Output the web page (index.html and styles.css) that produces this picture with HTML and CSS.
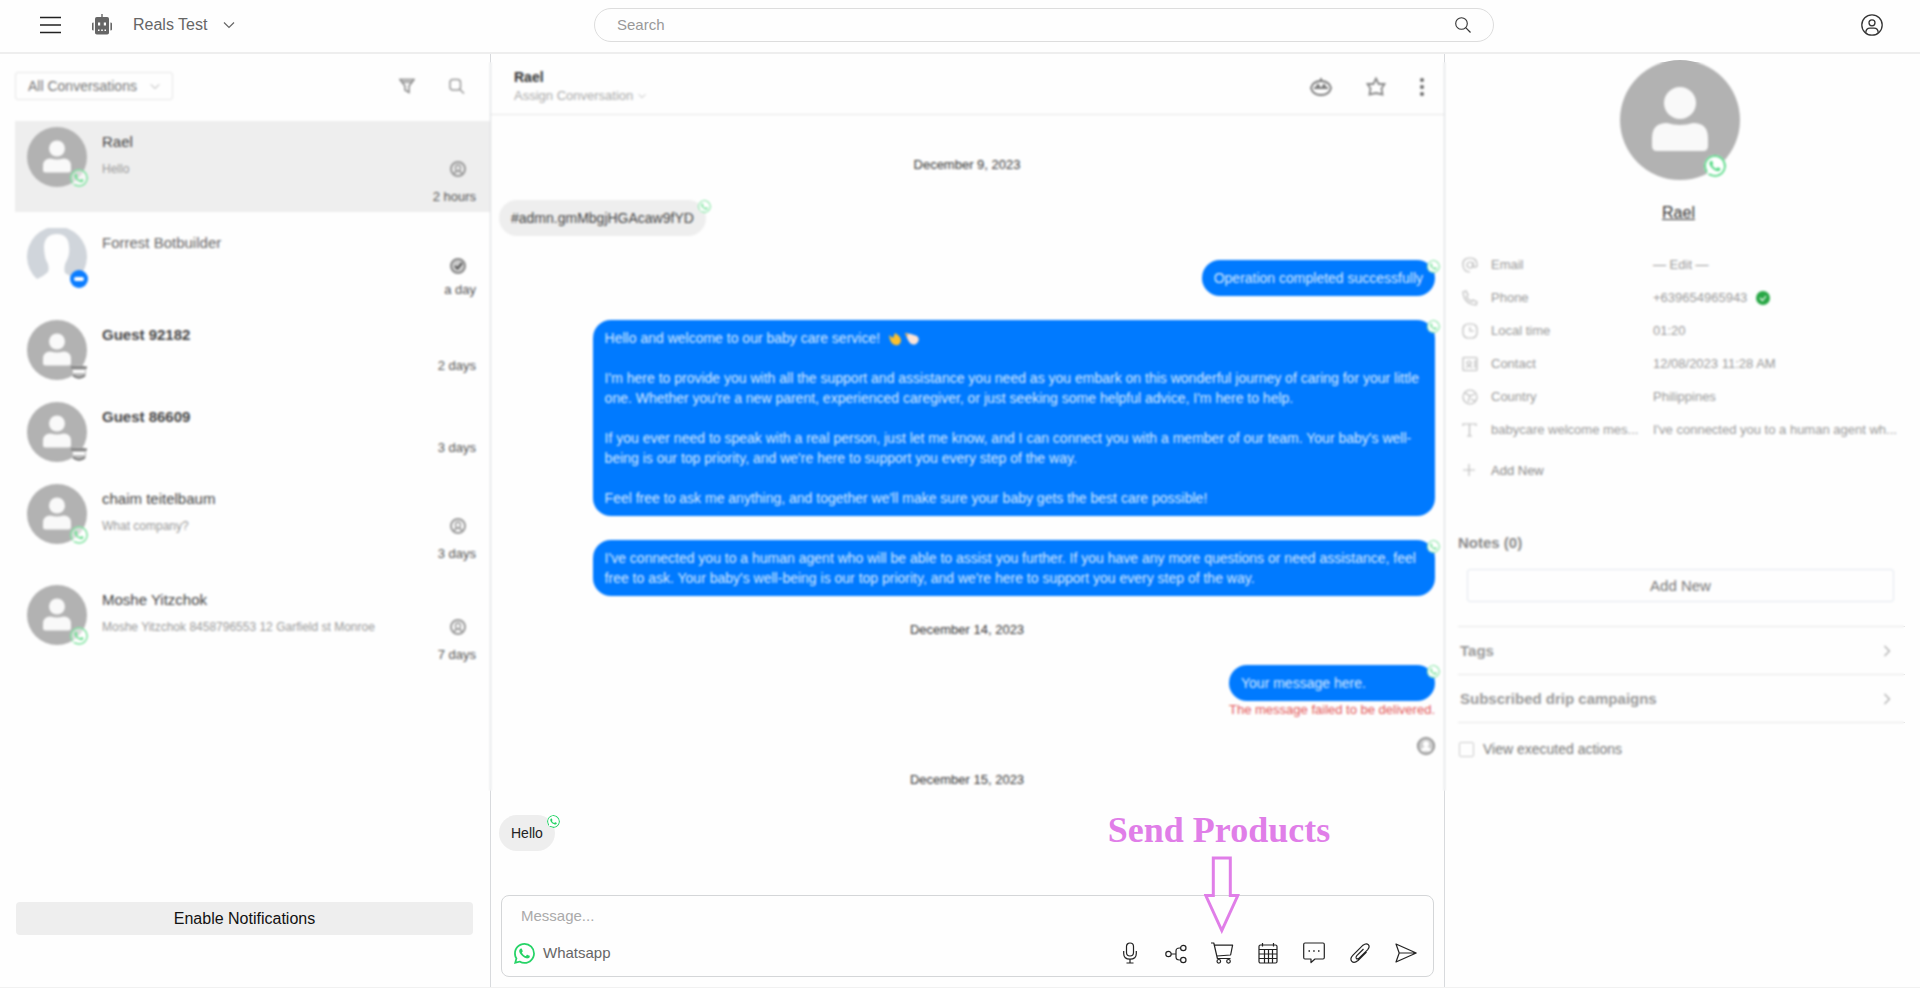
FILE: index.html
```html
<!DOCTYPE html>
<html lang="en">
<head>
<meta charset="utf-8">
<title>Live chat</title>
<link rel="stylesheet" href="styles.css">
</head>
<body>
<svg class="sprite" aria-hidden="true">
  <symbol id="i-wa" viewBox="0 0 16 16"><path fill="currentColor" d="M13.601 2.326A7.854 7.854 0 0 0 7.994 0C3.627 0 .068 3.558.064 7.926c0 1.399.366 2.76 1.057 3.965L0 16l4.204-1.102a7.933 7.933 0 0 0 3.79.965h.004c4.368 0 7.926-3.558 7.93-7.93A7.898 7.898 0 0 0 13.6 2.326zM7.994 14.521a6.573 6.573 0 0 1-3.356-.92l-.24-.144-2.494.654.666-2.433-.156-.251a6.56 6.56 0 0 1-1.007-3.505c0-3.626 2.957-6.584 6.591-6.584a6.56 6.56 0 0 1 4.66 1.931 6.557 6.557 0 0 1 1.928 4.66c-.004 3.639-2.961 6.592-6.592 6.592zm3.615-4.934c-.197-.099-1.17-.578-1.353-.646-.182-.065-.315-.099-.445.099-.133.197-.513.646-.627.775-.114.133-.232.148-.43.05-.197-.1-.836-.308-1.592-.985-.59-.525-.985-1.175-1.103-1.372-.114-.198-.011-.304.088-.403.087-.088.197-.232.296-.346.1-.114.133-.198.198-.33.065-.134.034-.248-.015-.347-.05-.099-.445-1.076-.612-1.47-.16-.389-.323-.335-.445-.34-.114-.007-.247-.007-.38-.007a.729.729 0 0 0-.529.247c-.182.198-.691.677-.691 1.654 0 .977.71 1.916.81 2.049.098.133 1.394 2.132 3.383 2.992.47.205.84.326 1.129.418.475.152.904.129 1.246.08.38-.058 1.171-.48 1.338-.943.164-.464.164-.86.114-.943-.049-.084-.182-.133-.38-.232z"/></symbol>
  <symbol id="i-avatar" viewBox="0 0 120 120"><circle cx="60" cy="60" r="60" fill="#b2b2b2"/><circle cx="60" cy="43" r="16" fill="#f9f9f9"/><path fill="#f9f9f9" d="M32 86V78Q32 63 47 63Q60 67 73 63Q88 63 88 78V86Q88 91 83 91H37Q32 91 32 86Z"/></symbol>
  <symbol id="i-silhouette" viewBox="0 0 60 60"><path fill="#d0d5db" d="M10 51A30 30 0 1 1 50 51Q46 50 38 45Q36 38 40 32Q43 26 42 18Q41 6 30 6Q18 6 17 18Q17 26 19 32Q23 38 21 44Q17 48 10 51Z"/></symbol>
  <symbol id="i-site" viewBox="0 0 18 18"><path d="M2 5Q9 0 16 5V13Q9 20 2 13Z" fill="#bbb"/><path d="M3 8H15V11H3Z" fill="#fff"/><path d="M1 5.500H17M3 13.500Q9 18 15 13.500" fill="none" stroke="#777" stroke-width="2"/></symbol>
  <symbol id="i-bot-dot" viewBox="0 0 18 18"><circle cx="9" cy="9" r="9" fill="#0a7cff"/><rect x="4" y="7" width="10" height="4" rx="2" fill="#fff"/></symbol>
  <symbol id="i-agent" viewBox="0 0 18 18"><circle cx="9" cy="9" r="7" fill="none" stroke="#999" stroke-width="2"/><path d="M9 5A2.5 3 0 0 1 9 11A2.5 3 0 0 1 9 5M5 14Q6 11 9 11T13 14" fill="none" stroke="#999" stroke-width="1.4"/></symbol>
  <symbol id="i-search" viewBox="0 0 16 16"><circle cx="6.5" cy="6.5" r="5.8" fill="none" stroke="currentColor" stroke-width="1.1"/><path d="M10.7 10.7L15.5 15.5" stroke="currentColor" stroke-width="1.2"/></symbol>
  <symbol id="i-down" viewBox="0 0 12 8"><path d="M1 1.5L6 6.5L11 1.5" fill="none" stroke="currentColor" stroke-width="1.2"/></symbol>
</svg>

<header class="top">
  <div class="brand">
    <button class="plain" aria-label="Menu"><svg width="22" height="18" viewBox="0 0 22 18"><path d="M0 1.5H21M0 9H21M0 16.5H21" stroke="#222" stroke-width="1.4"/></svg></button>
    <button class="plain account">
      <svg width="20" height="21" viewBox="0 0 20 21" fill="#666"><path d="M9.3 0H10.7V3H9.3Z"/><rect x="3" y="3" width="14" height="17.5" rx="1.8"/><path d="M0 9.5Q0 8.5 1.6 8.5V16.5Q0 16.5 0 15.5ZM20 9.5Q20 8.5 18.4 8.5V16.5Q20 16.5 20 15.5Z"/><path fill="#fff" d="M6 8.5H8.2V11.5H6ZM11.8 8.5H14V11.5H11.8ZM6 15.5H7.5V17H6ZM9.200 15.5H10.800V17H9.200ZM12.500 15.5H14V17H12.500Z"/></svg>
      <span>Reals Test</span>
      <svg width="12" height="8"><use href="#i-down"/></svg>
    </button>
  </div>
  <label class="search"><input type="text" placeholder="Search" aria-label="Search"><svg width="16" height="16"><use href="#i-search"/></svg></label>
  <button class="plain user" aria-label="Profile"><svg width="22" height="22" viewBox="0 0 22 22" fill="none" stroke="#333" stroke-width="1.3"><circle cx="11" cy="11" r="10.2"/><circle cx="11" cy="8.8" r="3"/><path d="M4.8 18.6Q5 14.2 9 14.2H13Q17 14.2 17.2 18.6"/></svg></button>
</header>

<main class="main">
  <section class="list">
    <div class="list-bar">
      <label class="pick"><select aria-label="Filter"><option>All Conversations</option></select><svg width="10" height="7"><use href="#i-down"/></svg></label>
      <div class="list-tools">
        <button class="plain" aria-label="Filter"><svg width="16" height="16" viewBox="0 0 16 16" fill="none" stroke="#888" stroke-width="1.500"><path d="M1 1.5H15L10 8V14.5L6 12V8L1 1.5ZM2 4H14"/></svg></button>
        <button class="plain" aria-label="Find"><svg width="16" height="16" viewBox="0 0 16 16" fill="none" stroke="#999" stroke-width="1.500"><rect x="1" y="1.500" width="10.500" height="10.500" rx="3"/><path d="M11 11.500L15 15.500"/></svg></button>
      </div>
    </div>
    <article class="conv conv-tall conv-on">
      <div class="face"><svg class="pic"><use href="#i-avatar"/></svg><svg class="badge wa"><use href="#i-wa"/></svg></div>
      <h3>Rael</h3><p>Hello</p><svg class="agent"><use href="#i-agent"/></svg><time>2 hours</time>
    </article>
    <article class="conv conv-mid">
      <div class="face"><svg class="pic"><use href="#i-silhouette"/></svg><svg class="badge"><use href="#i-bot-dot"/></svg></div>
      <h3 class="soft">Forrest Botbuilder</h3><svg class="agent" viewBox="0 0 18 18"><circle cx="9" cy="9" r="7" fill="#ccc" stroke="#888" stroke-width="2"/><path d="M6 9L8.500 11.500L13 6" fill="none" stroke="#555" stroke-width="2"/></svg><time>a day</time>
    </article>
    <article class="conv">
      <div class="face"><svg class="pic"><use href="#i-avatar"/></svg><svg class="badge"><use href="#i-site"/></svg></div>
      <h3 class="unread">Guest 92182</h3><time>2 days</time>
    </article>
    <article class="conv">
      <div class="face"><svg class="pic"><use href="#i-avatar"/></svg><svg class="badge"><use href="#i-site"/></svg></div>
      <h3 class="unread">Guest 86609</h3><time>3 days</time>
    </article>
    <article class="conv conv-tall">
      <div class="face"><svg class="pic"><use href="#i-avatar"/></svg><svg class="badge wa"><use href="#i-wa"/></svg></div>
      <h3>chaim teitelbaum</h3><p>What company?</p><svg class="agent"><use href="#i-agent"/></svg><time>3 days</time>
    </article>
    <article class="conv conv-tall">
      <div class="face"><svg class="pic"><use href="#i-avatar"/></svg><svg class="badge wa"><use href="#i-wa"/></svg></div>
      <h3>Moshe Yitzchok</h3><p>Moshe Yitzchok 8458796553 12 Garfield st Monroe</p><svg class="agent"><use href="#i-agent"/></svg><time>7 days</time>
    </article>
    <button class="notify">Enable Notifications</button>
  </section>

  <section class="chat">
    <div class="chat-head">
      <div>
        <h2>Rael</h2>
        <button class="plain assign">Assign Conversation <svg width="8" height="6"><use href="#i-down"/></svg></button>
      </div>
      <div class="chat-tools">
        <button class="plain" aria-label="Bot"><svg width="24" height="20" viewBox="0 0 24 20" fill="none" stroke="#777" stroke-width="1.800"><path d="M12 1V4"/><path d="M2 11Q4 4 12 4T22 11Q20 18 12 18T2 11ZM5 11H19"/><circle cx="9" cy="9" r="1"/><circle cx="15" cy="9" r="1"/></svg></button>
        <button class="plain" aria-label="Star"><svg width="20" height="20" viewBox="0 0 20 20" fill="none" stroke="#888" stroke-width="1.800"><path d="M10 1.500L12.600 7H18.500L15.500 11.500L16.500 17.500L10 16L3.500 17.500L4.500 11.500L1.500 7H7.400Z"/></svg></button>
        <button class="plain" aria-label="More"><svg width="6" height="20" viewBox="0 0 6 20" fill="#666"><circle cx="3" cy="3" r="2"/><circle cx="3" cy="10" r="2"/><circle cx="3" cy="17" r="2"/></svg></button>
      </div>
    </div>
    <div class="thread">
      <p class="date">December 9, 2023</p>
      <div class="msg in early"><div class="bubble">#admn.gmMbgjHGAcaw9fYD<svg class="tag"><use href="#i-wa"/></svg></div></div>
      <div class="msg out early"><div class="bubble">Operation completed successfully<svg class="tag"><use href="#i-wa"/></svg></div></div>
      <div class="msg out early"><div class="bubble"><p>Hello and welcome to our baby care service! <svg class="wave" viewBox="0 0 32 14"><path d="M1 3L5 6L7 1Q13 4 13 9Q12 14 7 13Q2 12 1 3Z" fill="#fbc02d"/><path d="M17 1L23 2L29 4Q33 8 28 12Q23 14 20 8Z" fill="#fbe3d6"/><path d="M17 1L20 2L19 5Z" fill="#e0a030"/></svg></p><p>I'm here to provide you with all the support and assistance you need as you embark on this wonderful journey of caring for your little one. Whether you're a new parent, experienced caregiver, or just seeking some helpful advice, I'm here to help.</p><p>If you ever need to speak with a real person, just let me know, and I can connect you with a member of our team. Your baby's well-being is our top priority, and we're here to support you every step of the way.</p><p>Feel free to ask me anything, and together we'll make sure your baby gets the best care possible!</p><svg class="tag"><use href="#i-wa"/></svg></div></div>
      <div class="msg out early"><div class="bubble">I've connected you to a human agent who will be able to assist you further. If you have any more questions or need assistance, feel free to ask. Your baby's well-being is our top priority, and we're here to support you every step of the way.<svg class="tag"><use href="#i-wa"/></svg></div></div>
      <p class="date">December 14, 2023</p>
      <div class="msg out early failed"><div><div class="bubble">Your message here.<svg class="tag"><use href="#i-wa"/></svg></div><p class="error">The message failed to be delivered.</p><svg class="sender" viewBox="0 0 18 18"><circle cx="9" cy="9" r="8.200" fill="#ccc" stroke="#888" stroke-width="1.600"/><circle cx="9" cy="7" r="3" fill="#fff"/><path d="M4 14Q4 10 9 10T14 14Z" fill="#fff"/></svg></div></div>
      <p class="date">December 15, 2023</p>
      <div class="msg in"><div class="bubble">Hello<svg class="tag"><use href="#i-wa"/></svg></div></div>
    </div>
    <form class="composer">
      <input type="text" placeholder="Message..." aria-label="Message">
      <div class="composer-bar">
        <button type="button" class="plain channel"><svg class="wa" width="21" height="21"><use href="#i-wa"/></svg>Whatsapp</button>
        <div class="actions">
          <button type="button" class="plain" aria-label="Record"><svg viewBox="0 0 22 22"><rect x="7.500" y="1" width="7" height="13" rx="3.500"/><path d="M4.700 9V11.500Q4.700 17.200 11 17.200T17.300 11.500V9M11 17.200V21M7.500 21H14.500"/></svg></button>
          <button type="button" class="plain" aria-label="Flow"><svg viewBox="0 0 22 22"><circle cx="3.500" cy="12" r="2.700"/><circle cx="18.300" cy="6" r="2.700"/><circle cx="18.300" cy="18" r="2.700"/><path d="M6.200 12H11M15.600 6H14.500Q11 6 11 9V15Q11 18 14.500 18H15.600"/></svg></button>
          <div class="cart">
            <div class="callout">
              <span>Send Products</span>
              <svg width="36" height="78" viewBox="0 0 36 78" fill="none" stroke="#e07ee8" stroke-width="3"><path d="M9.500 2H26.500V39.500H34L18 74.500L2 39.500H9.500Z"/></svg>
            </div>
            <button type="button" class="plain" aria-label="Send products"><svg viewBox="0 0 22 22"><path d="M0 1H2.800L6.400 16.500H19.500M3.500 3.200H21.600L19.600 13L5.800 14"/><circle cx="7.800" cy="19.300" r="1.800"/><circle cx="17.500" cy="19.300" r="1.800"/></svg></button>
          </div>
          <button type="button" class="plain" aria-label="Schedule"><svg viewBox="0 0 22 22"><rect x="2" y="3" width="18" height="18" rx="1.500"/><path d="M2 7.500H20M2 12H20M2 16.500H20M7.500 7.500V21M11.500 7.500V21M15.500 7.500V21M5.500 1V4.500M16.500 1V4.500"/></svg></button>
          <button type="button" class="plain" aria-label="Saved replies"><svg viewBox="0 0 22 22"><path d="M2 1H20Q21.300 1 21.300 2.500V15.500Q21.300 17 20 17H12L8 20.500V17H2Q.700 17 .700 15.500V2.500Q.700 1 2 1Z"/><path d="M5.500 9H7M10.200 9H11.700M15 9H16.500" stroke-width="1.700"/></svg></button>
          <button type="button" class="plain" aria-label="Attach"><svg viewBox="0 0 22 22"><path d="M14.500 7L7.800 13.700Q6.300 15.500 7.300 16.500T10.300 16L18.500 7.800Q21.300 4.800 19.300 2.700T14 3.200L4 13.200Q.500 17 2.800 19.300T9 18.500L17.500 10"/></svg></button>
          <button type="submit" class="plain" aria-label="Send"><svg viewBox="0 0 22 22"><path d="M1 2L21.200 11L1 20L4.200 11ZM4.200 11H21"/></svg></button>
        </div>
      </div>
    </form>
  </section>

  <aside class="info">
    <div class="info-face"><svg class="pic"><use href="#i-avatar"/></svg><svg class="badge wa"><use href="#i-wa"/></svg></div>
    <a class="info-name" href="#">Rael</a>
    <dl class="facts">
      <div><dt><svg viewBox="0 0 16 16"><circle cx="8" cy="8" r="3"/><path d="M11 5V9.500Q13 11 15 9Q15.500 1 8 1T1 8T8 15"/></svg><span>Email</span></dt><dd>— Edit —</dd></div>
      <div><dt><svg viewBox="0 0 16 16"><path d="M1 2L4 1L6 5L4.500 7Q6 10 9.500 11.500L11 10L15 12L14 15Q2 14 1 2Z"/></svg><span>Phone</span></dt><dd>+639654965943<svg class="ok" viewBox="0 0 14 14"><circle cx="7" cy="7" r="7" fill="#28a745" stroke="none"/><path d="M4 7L6.500 9.500L10 5" stroke="#fff"/></svg></dd></div>
      <div><dt><svg viewBox="0 0 16 16"><rect x="1" y="1" width="14" height="14" rx="5"/><path d="M8 4V8H12"/></svg><span>Local time</span></dt><dd>01:20</dd></div>
      <div><dt><svg viewBox="0 0 16 16"><rect x="1" y="1.500" width="14" height="13" rx="1"/><circle cx="7" cy="7" r="2"/><path d="M4 12Q7 8 10 12M13 4V12"/></svg><span>Contact</span></dt><dd>12/08/2023 11:28 AM</dd></div>
      <div><dt><svg viewBox="0 0 16 16"><circle cx="8" cy="8" r="7"/><path d="M3 4L8 7L6 13M8 7L13 5M9 10L13 12"/></svg><span>Country</span></dt><dd>Philippines</dd></div>
      <div><dt><svg viewBox="0 0 16 16"><path d="M1 4V2H14V4M7.500 2V14M5 14H10"/></svg><span>babycare welcome mes...</span></dt><dd>I've connected you to a human agent wh...</dd></div>
    </dl>
    <button class="plain add"><svg viewBox="0 0 16 16"><path d="M7 1V13M1 7H13"/></svg>Add New</button>
    <h4 class="notes">Notes (0)</h4>
    <button class="add-note">Add New</button>
    <div class="folds">
      <button class="plain fold">Tags<svg viewBox="0 0 8 12"><path d="M1.500 1L6.500 6L1.500 11"/></svg></button>
      <button class="plain fold">Subscribed drip campaigns<svg viewBox="0 0 8 12"><path d="M1.500 1L6.500 6L1.500 11"/></svg></button>
    </div>
    <label class="check"><input type="checkbox">View executed actions</label>
  </aside>
  <div class="veil"></div>
</main>
</body>
</html>
```
FILE: styles.css
```css
* { box-sizing: border-box; }
body {
  margin: 0;
  min-height: 100vh;
  display: flex;
  flex-direction: column;
  background: #fefefe;
  color: #444;
  font-family: "Liberation Sans", Arial, sans-serif;
  font-size: 14px;
  line-height: 20px;
}
h2, h3, h4, p, dl, dd { margin: 0; }
svg { display: block; flex: none; }
button, input, select { font: inherit; color: inherit; }
.sprite { position: absolute; width: 0; height: 0; }
.plain { border: 0; padding: 0; background: none; }
.wa { color: #25d366; }

/* top bar */
.top {
  display: grid;
  grid-template-columns: 594fr 900fr 426fr;
  align-items: center;
  height: 54px;
  padding-bottom: 3px;
  border-bottom: 2px solid #eee;
}
.brand { display: flex; align-items: center; gap: 30px; padding-left: 40px; }
.account { display: flex; align-items: center; gap: 21px; font-size: 16px; color: #666; }
.account svg:last-child { margin-left: -5px; }
.search {
  display: flex;
  align-items: center;
  height: 34px;
  padding: 0 22px;
  border: 1px solid #ddd;
  border-radius: 17px;
  color: #333;
}
.search input { flex: 1; border: 0; outline: 0; padding: 0; background: none; font-size: 15px; }
.search input::placeholder { color: #999; }
.user { justify-self: end; margin-right: 37px; }

/* columns */
.main {
  position: relative;
  flex: 1;
  display: grid;
  grid-template-columns: 490fr 954fr 476fr;
  border-bottom: 1px solid #f1f1f1;
}
.veil {
  position: absolute;
  top: 8px;
  right: 16px;
  bottom: 196px;
  left: 0;
  backdrop-filter: blur(1px);
  pointer-events: none;
}

/* conversations */
.list { display: flex; flex-direction: column; gap: 10px; padding: 18px 0 52px 15px; min-width: 0; }
.list-bar { display: flex; justify-content: space-between; align-items: center; margin-bottom: 11px; padding-right: 25px; }
.pick {
  display: flex;
  align-items: center;
  width: 158px;
  height: 28px;
  padding: 0 12px;
  border: 1px solid #e6e6e6;
  border-radius: 3px;
  color: #777;
}
.pick select { flex: 1; appearance: none; border: 0; padding: 0; background: none; }
.pick svg { color: #aaa; }
.list-tools { display: flex; gap: 34px; }
.conv {
  display: grid;
  grid-template-columns: 60px 1fr 42px;
  grid-template-rows: 30px 30px;
  column-gap: 15px;
  align-content: start;
  min-height: 72px;
  padding: 6px 14px 0 12px;
}
.conv-tall { min-height: 91px; grid-template-rows: 30px 24px 30px; }
.conv-mid { min-height: 82px; grid-template-rows: 30px 16px 30px; }
.conv-on { background: #eee; }
.face { position: relative; grid-row: 1 / -1; width: 60px; height: 60px; }
.face .pic { width: 60px; height: 60px; }
.face .badge { position: absolute; right: -1px; bottom: 0; width: 18px; height: 18px; }
.face .wa { background: #fff8; border-radius: 50%; color: #6fe094; }
.conv h3 { grid-column: 2 / 4; font-size: 15px; line-height: 30px; font-weight: 400; color: #444; }
.conv h3.soft { color: #666; }
.conv h3.unread { font-weight: 700; }
.conv p { grid-column: 2; grid-row: 2; font-size: 12px; line-height: 24px; color: #999; white-space: nowrap; }
.conv .agent { grid-column: 3; grid-row: 2; width: 18px; height: 18px; align-self: center; justify-self: end; margin-right: 9px; }
.conv time { grid-column: 3; grid-row: -2; justify-self: end; white-space: nowrap; font-size: 13px; line-height: 32px; color: #555; }
.notify { height: 33px; margin: auto 17px 0 1px; border: 0; border-radius: 4px; background: #eee; color: #111; font-size: 16px; }

/* chat */
.chat { display: flex; flex-direction: column; min-width: 0; border-left: 1px solid #d8dadd; }
.chat-head { display: flex; justify-content: space-between; align-items: center; height: 61px; padding: 6px 19px 0 23px; border-bottom: 1px solid #e6e6e6; }
.chat-head h2 { font-size: 14px; line-height: 18px; color: #333; }
.assign { display: flex; align-items: center; gap: 5px; font-size: 13px; color: #aaa; }
.chat-tools { display: flex; align-items: center; gap: 33px; }
.thread { padding: 40px 9px 0 8px; }
.date { margin-bottom: 25px; text-align: center; font-size: 13px; color: #333; }
.msg { display: flex; margin-bottom: 24px; }
.msg.out { justify-content: flex-end; }
.bubble { position: relative; max-width: 90%; padding: 8px 12px; border-radius: 18px; background: #eee; color: #222; }
.bubble p + p { margin-top: 20px; }
.early .bubble { color: #444; }
.out .bubble { background: #007aff; color: #d9eaff; }
.failed .bubble { max-width: none; }
.failed { margin-bottom: 15px; }
.tag { position: absolute; top: 0; right: -5px; width: 13px; height: 13px; border-radius: 50%; background: #fff; color: #25d366; }
.early .tag { color: #6fe094; }
.wave { display: inline-block; width: 32px; height: 14px; margin-left: 4px; vertical-align: -3px; }
.error { font-size: 13px; line-height: 18px; color: #e25555; }
.sender { width: 18px; height: 18px; margin: 18px 0 0 auto; }

.composer { margin: auto 10px 10px 10px; padding: 10px 16px 12px 12px; border: 1px solid #d4d6d8; border-radius: 8px; }
.composer input { display: block; width: 100%; height: 20px; padding: 0 7px; border: 0; outline: 0; background: none; font-size: 15px; line-height: 20px; }
.composer input::placeholder { color: #aaa; }
.composer-bar { display: flex; justify-content: space-between; align-items: center; margin-top: 16px; }
.channel { display: flex; align-items: center; gap: 8px; font-size: 15px; color: #666; }
.actions { display: flex; gap: 24px; }
.actions button svg { width: 22px; height: 22px; overflow: visible; fill: none; stroke: #222; stroke-width: 1.2; stroke-linejoin: round; }
.cart { position: relative; display: flex; }
.callout {
  position: absolute;
  bottom: 30px;
  left: 50%;
  display: flex;
  flex-direction: column;
  align-items: center;
  gap: 6px;
  transform: translateX(-50%);
  color: #e07ee8;
  font: 700 36px/40px "Liberation Serif", "Times New Roman", serif;
  white-space: nowrap;
  pointer-events: none;
}
.callout span { padding-right: 6px; }

/* details */
.info { display: flex; flex-direction: column; min-width: 0; padding: 6px 15px 0 13px; border-left: 1px solid #d8dadd; }
.info-face { position: relative; align-self: center; width: 120px; height: 120px; margin-right: 4px; }
.info-face .pic { width: 120px; height: 120px; }
.info-face .badge { position: absolute; right: 14px; bottom: 3px; width: 22px; height: 22px; border-radius: 50%; background: #fff; color: #55da85; }
.info-name { align-self: center; margin: 23px 6px 0 0; font-size: 16px; color: #333; }
.facts { margin-top: 25px; font-size: 13px; color: #999; }
.facts div { display: grid; grid-template-columns: 181px 1fr; gap: 14px; height: 33px; align-items: center; }
.facts dt { display: flex; align-items: center; gap: 13px; min-width: 0; padding-left: 4px; }
.facts dt span, .facts dd { white-space: nowrap; }
.facts dd { min-width: 0; }
.facts svg, .add svg { width: 16px; height: 16px; fill: none; stroke: #bbb; stroke-width: 1.2; }
.facts .ok { display: inline-block; width: 14px; height: 14px; margin-left: 9px; vertical-align: -3px; }
.add { display: flex; align-items: center; align-self: flex-start; gap: 13px; height: 33px; margin-top: 8px; padding-left: 4px; font-size: 13px; color: #888; }
.notes { margin-top: 46px; font-size: 15px; color: #888; }
.add-note { height: 33px; margin: 16px 11px 24px 9px; border: 1px solid #e2e7ee; border-radius: 3px; background: none; font-size: 15px; color: #777; }
.folds { border-bottom: 1px solid #e6e6e6; }
.fold { display: flex; justify-content: space-between; align-items: center; width: 100%; height: 48px; padding: 0 14px 0 2px; border-top: 1px solid #e6e6e6; font-size: 15px; font-weight: 700; color: #999; }
.fold svg { width: 8px; height: 12px; fill: none; stroke: #aaa; stroke-width: 1.2; }
.check { display: flex; align-items: center; gap: 9px; margin-top: 16px; color: #777; }
.check input { appearance: none; width: 15px; height: 15px; margin: 0 0 0 1px; border: 1px solid #ccc; border-radius: 2px; }
```
